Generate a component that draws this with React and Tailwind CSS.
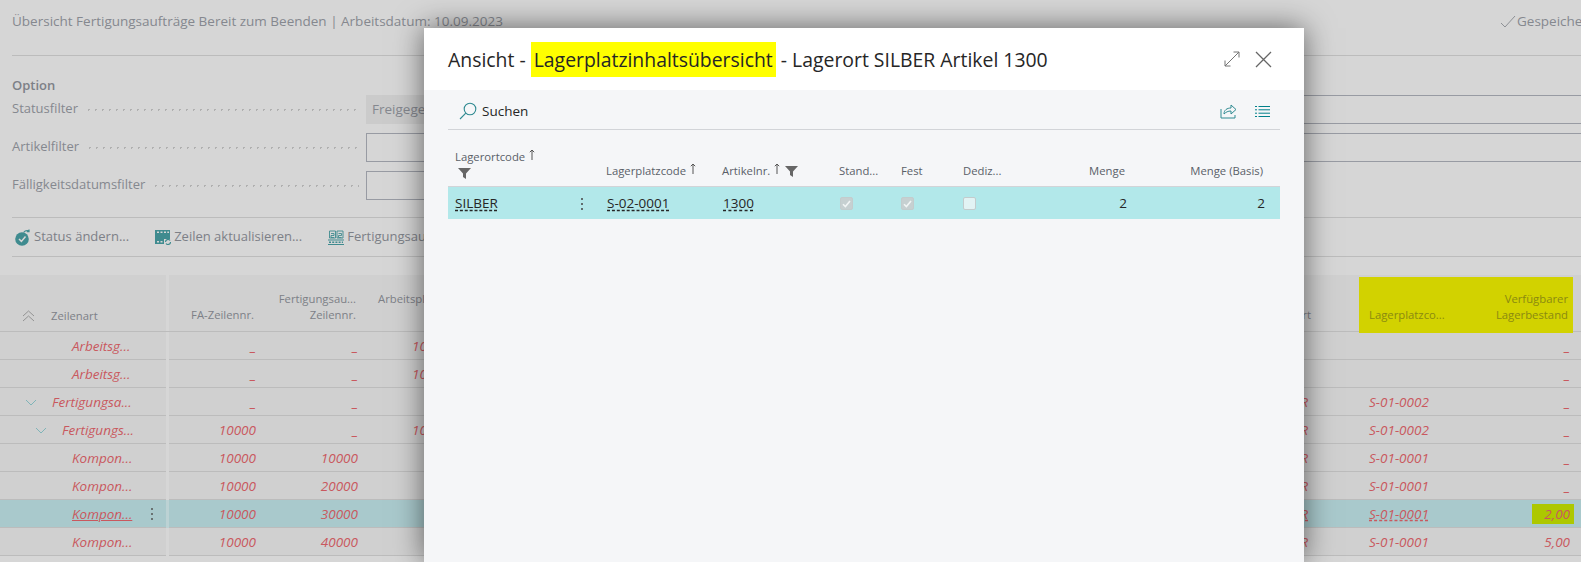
const font = "font-['Open_Sans','Noto_Sans',sans-serif]";
const rowGrid = "grid grid-cols-[166px_3px_90px_102px_110px_1fr_115px_155px_111px]";

const rows = [
  { art: "Arbeitsg...", indent: "pl-[72px]", fa: "_", faz: "_", arb: "100", ort: "", platz: "", best: "_" },
  { art: "Arbeitsg...", indent: "pl-[72px]", fa: "_", faz: "_", arb: "100", ort: "", platz: "", best: "_" },
  { art: "Fertigungsa...", indent: "pl-[52px]", chevron: "ml-[-27px]", fa: "_", faz: "_", arb: "", ort: "SILBER", platz: "S-01-0002", best: "_" },
  { art: "Fertigungs...", indent: "pl-[62px]", chevron: "ml-[-27px]", fa: "10000", faz: "_", arb: "100", ort: "SILBER", platz: "S-01-0002", best: "_" },
  { art: "Kompon...", indent: "pl-[72px]", fa: "10000", faz: "10000", arb: "", ort: "SILBER", platz: "S-01-0001", best: "_" },
  { art: "Kompon...", indent: "pl-[72px]", fa: "10000", faz: "20000", arb: "", ort: "SILBER", platz: "S-01-0001", best: "_" },
  { art: "Kompon...", indent: "pl-[72px]", fa: "10000", faz: "30000", arb: "", ort: "SILBER", platz: "S-01-0001", best: "2,00", selected: true },
  { art: "Kompon...", indent: "pl-[72px]", fa: "10000", faz: "40000", arb: "", ort: "SILBER", platz: "S-01-0001", best: "5,00" },
];

function Kebab({ color }) {
  return (
    <svg width="4" height="14" viewBox="0 0 4 14" className={color}>
      <circle cx="2" cy="2" r="1" fill="currentColor" />
      <circle cx="2" cy="7" r="1" fill="currentColor" />
      <circle cx="2" cy="12" r="1" fill="currentColor" />
    </svg>
  );
}

function Chevron({ className }) {
  return (
    <svg width="12" height="7" viewBox="0 0 12 7" fill="none" stroke="#7fb4b8" strokeWidth="1" className={className}>
      <path d="M1 1l5 5 5-5" />
    </svg>
  );
}

function FilterIcon({ className }) {
  return (
    <svg width="13" height="11" viewBox="0 0 13 11" className={className}>
      <path d="M0 0h13L8 5.500V11L5 9V5.500z" fill="#666" />
    </svg>
  );
}

function SortUp() {
  return (
    <svg width="6" height="11" viewBox="0 0 6 11" fill="none" stroke="#555" strokeWidth="1" className="ml-1 inline-block align-[1px]">
      <path d="M3 11V1M.8 3.200 3 1l2.200 2.200" />
    </svg>
  );
}

function Field({ label, children }) {
  return (
    <div className="flex h-[28px] items-center text-[13px] text-[#85888f]">
      <span className="w-auto whitespace-nowrap">{label}</span>
      <span className="mx-[7px] h-[3px] flex-1 bg-[radial-gradient(circle,#b0b0b0_1px,transparent_1px)] bg-[length:7px_3px] bg-repeat-x" />
      <div className="w-[1215px] shrink-0">{children}</div>
    </div>
  );
}

function CheckBox({ checked }) {
  return (
    <span className={`flex h-[13px] w-[13px] items-center justify-center rounded-[2px] border ${checked ? "border-[#c3cccd] bg-[#c6d0d1]" : "border-[#c3cccd] bg-[#e2f3f4]"}`}>
      {checked && (
        <svg width="9" height="8" viewBox="0 0 9 8" fill="none" stroke="#f1f5f5" strokeWidth="1.600">
          <path d="M1 4.200 3.400 6.600 8 1" />
        </svg>
      )}
    </span>
  );
}

function DataRow({ row }) {
  const sel = row.selected;
  const bg = sel ? "bg-[#a9c9cc]" : "bg-[#d0d0d0]";
  const line = "border-b border-[#bcbcbc] pt-[1px]";
  return (
    <div className={`${rowGrid} h-[28px] text-[13.5px] italic text-[#c9585e]`}>
      <div className={`flex items-center ${row.indent} ${bg} ${line}`}>
        {row.chevron && <Chevron className={`${row.chevron} mr-[15px] shrink-0`} />}
        <span className={sel ? "underline" : ""}>{row.art}</span>
        {sel && <Kebab color="ml-[18px] text-[#555]" />}
      </div>
      <div className={sel ? "bg-[#bcd2d4]" : "bg-[#d6d6d6]"} />
      <div className={`flex items-center justify-end pr-[3px] ${bg} ${line}`}>{row.fa}</div>
      <div className={`flex items-center justify-end pr-[3px] ${bg} ${line}`}>{row.faz}</div>
      <div className={`flex items-center pl-[51px] ${bg} ${line}`}>{row.arb}</div>
      <div className={`${bg} ${line}`} />
      <div className={`flex items-center justify-end pr-[7px] ${bg} ${line}`}>
        <span className={sel ? "underline decoration-dashed" : ""}>{row.ort}</span>
      </div>
      <div className={`flex items-center pl-[54px] ${bg} ${line}`}>
        <span className={sel ? "underline decoration-dashed" : ""}>{row.platz}</span>
      </div>
      <div className={`flex items-center justify-end ${bg} ${line}`}>
        {sel ? (
          <span className="mr-[7px] flex h-[20px] w-[42px] items-center justify-end bg-[#adc800] pr-[4px]">{row.best}</span>
        ) : (
          <span className="pr-[11px]">{row.best}</span>
        )}
      </div>
    </div>
  );
}

function BackgroundPage() {
  return (
    <div className="h-full bg-[#d6d6d6]">
      <div className="pl-[12px]">
        <div className="flex h-[56px] items-center border-b border-[#bcbcbc] pb-[13px] text-[13.5px] text-[#85888f]">
          <span className="flex-1 whitespace-nowrap">Übersicht Fertigungsaufträge Bereit zum Beenden | Arbeitsdatum: 10.09.2023</span>
          <div className="flex w-[81px] shrink-0 items-center gap-[1px] overflow-hidden whitespace-nowrap">
            <svg width="16" height="13" viewBox="0 0 16 13" fill="none" stroke="#8d9095" strokeWidth="1" className="shrink-0">
              <path d="M1 8l4 4L15 1" />
            </svg>
            Gespeichert
          </div>
        </div>
        <div className="pt-[20px] text-[13px] font-semibold leading-[19px] text-[#7d8087]">Option</div>
        <div className="flex flex-col gap-[10px]">
          <Field label="Statusfilter">
            <div className="flex h-[29px]">
              <div className="flex w-[150px] items-center bg-[#cbcbcb] pl-[6px] text-[13.5px]">Freigegeben</div>
              <div className="flex-1 border-y border-[#989ba3]" />
            </div>
          </Field>
          <Field label="Artikelfilter">
            <div className="h-[29px] border border-r-0 border-[#989ba3]" />
          </Field>
          <Field label="Fälligkeitsdatumsfilter">
            <div className="h-[29px] w-[200px] border border-[#989ba3]" />
          </Field>
        </div>
        <div className="mt-[18px] flex h-[40px] items-center gap-[26px] border-y border-[#bcbcbc] text-[13px] text-[#7d8087]">
          <div className="flex items-center gap-[3px] pl-[2px]">
            <svg width="17" height="17" viewBox="0 0 17 17">
              <circle cx="8" cy="10" r="6.800" fill="#3f8b8f" />
              <path d="M5 10l2.400 2.400L11.500 7.600" stroke="#d6d6d6" strokeWidth="1.500" fill="none" />
              <path d="M9.500 3.500c1.600-2 3.500-2.400 5.500-1.600M15 .5v2.200h-2.200" stroke="#3f8b8f" strokeWidth="1.200" fill="none" />
            </svg>
            Status ändern...
          </div>
          <div className="flex items-center gap-[3px]">
            <svg width="16" height="15" viewBox="0 0 16 15">
              <path d="M0 0h15v9h-6v5H0z" fill="#3f8b8f" />
              <path d="M2 1.500h2v1.500H2zm3.500 0h2v1.500h-2zm3.500 0h2v1.500H9zm3.300 0h1.700v1.500h-1.700zM2 11h2v1.500H2zm3.500 0h2v1.500h-2z" fill="#d6d6d6" />
              <path d="M10.500 12a2.500 2.500 0 0 1 4.500-1.500M15.500 12a2.500 2.500 0 0 1-4.500 1.500" stroke="#3f8b8f" strokeWidth="1.200" fill="none" />
            </svg>
            Zeilen aktualisieren...
          </div>
          <div className="flex items-center gap-[3px]">
            <svg width="16" height="15" viewBox="0 0 16 15" fill="none" stroke="#3f8b8f">
              <path d="M1.500 1h6v7h-6zM9 1h6v7H9zM3 3.500h3v2H3v2h3M10.500 3.500h3v2h-3v2h3" strokeWidth="0.900" />
              <path d="M0 10h16M0 14.500h16" strokeWidth="1" />
              <path d="M1 12.200h14" strokeWidth="1.600" strokeDasharray="2 1.200" />
            </svg>
            Fertigungsauftrag
          </div>
        </div>
      </div>

      <div className="mt-[18px]">
        <div className={`${rowGrid} h-[57px] border-b border-[#bcbcbc] text-[11.3px] leading-[16px] text-[#7d8087]`}>
          <div className="flex items-center bg-[#d0d0d0] pl-[22px] pt-[25px]">
            <svg width="13" height="12" viewBox="0 0 13 12" fill="none" stroke="#949494">
              <path d="M1 6l5.500-5L12 6M1 11l5.500-5L12 11" />
            </svg>
            <span className="pl-[16px]">Zeilenart</span>
          </div>
          <div className="bg-[#d6d6d6]" />
          <div className="flex items-end justify-end bg-[#d0d0d0] pb-[8px] pr-[5px]">FA-Zeilennr.</div>
          <div className="flex flex-col items-end justify-end bg-[#d0d0d0] pb-[8px] pr-[5px]">
            <span>Fertigungsau...</span>
            <span>Zeilennr.</span>
          </div>
          <div className="flex items-end whitespace-nowrap bg-[#d0d0d0] pb-[24px] pl-[17px]">Arbeitsplannr.</div>
          <div className="bg-[#d0d0d0]" />
          <div className="flex items-end justify-end bg-[#d0d0d0] pb-[8px] pr-[4px]">Lagerort</div>
          <div className="relative z-0 flex items-end bg-[#d0d0d0] pb-[8px] pl-[54px]">
            <div className="absolute bottom-[-2px] left-[44px] top-[2px] -z-10 w-[111px] bg-[#d2d200]" />
            <span className="text-[#8a8a10]">Lagerplatzco...</span>
          </div>
          <div className="relative z-0 flex flex-col items-end justify-end bg-[#d0d0d0] pb-[8px] pr-[13px] text-[#8a8a10]">
            <div className="absolute bottom-[-2px] left-0 right-[8px] top-[2px] -z-10 bg-[#d2d200]" />
            <span>Verfügbarer</span>
            <span>Lagerbestand</span>
          </div>
        </div>
        {rows.map((row, i) => (
          <DataRow key={i} row={row} />
        ))}
      </div>
    </div>
  );
}

function Modal() {
  return (
    <div className="absolute bottom-0 left-[424px] top-[28px] flex w-[880px] flex-col bg-[#f5f6f8] shadow-[0_0_28px_rgba(0,0,0,0.55)]">
      <div className="flex h-[62px] items-center bg-white pl-[24px] pr-[32px]">
        <h1 className="flex-1 whitespace-nowrap pt-[1px] text-[19.4px] font-medium text-[#262626]">
          Ansicht - <span className="bg-[#ffff00] px-[3px] py-[4px]">Lagerplatzinhaltsübersicht</span> - Lagerort SILBER Artikel 1300
        </h1>
        <svg width="16" height="16" viewBox="0 0 16 16" fill="none" stroke="#757575" strokeWidth="1" className="mr-[15px]">
          <path d="M1 15 15 1M9.500 1H15v5.500M1 9.500V15h5.500" />
        </svg>
        <svg width="17" height="17" viewBox="0 0 17 17" fill="none" stroke="#666" strokeWidth="1.300">
          <path d="M1 1l15 15M16 1 1 16" />
        </svg>
      </div>
      <div className="flex-1 px-[24px]">
        <div className="flex h-[40px] items-center border-b border-[#d2d4d8] pt-[3px]">
          <svg width="18" height="18" viewBox="0 0 18 18" fill="none" strokeWidth="1.100" className="ml-[11px]">
            <circle cx="11" cy="7" r="5.800" stroke="#2f8a91" />
            <path d="M6.800 11.200 1 17" stroke="#2f8a91" />
          </svg>
          <span className="ml-[5px] flex-1 text-[13.5px] text-[#262626]">Suchen</span>
          <svg width="17" height="16" viewBox="0 0 17 16" fill="none" stroke="#2f8a91" strokeWidth="1" className="mr-[18px]">
            <path d="M1 6v9h14v-3" />
            <path d="M4 11c0-4 3-6 7-6V2l5 4.500L11 11V8C8 8 6 9 4 11z" />
          </svg>
          <svg width="15" height="11" viewBox="0 0 15 11" fill="none" stroke="#00808a" strokeWidth="1" className="mr-[10px]">
            <path d="M3.500.5H15M3.500 3.800H15M3.500 7.200H15M3.500 10.500H15M0 .5h2M0 3.800h2M0 7.200h2M0 10.500h2" />
          </svg>
        </div>
        <div className="grid h-[57px] grid-cols-[152px_116px_116px_62px_62px_74px_102px_148px] border-b border-[#d2d4d8] pb-[7px] text-[11.3px] leading-[16px] text-[#5a5f68]">
          <div className="flex flex-col justify-end pl-[7px]">
            <span className="whitespace-nowrap">Lagerortcode<SortUp /></span>
            <FilterIcon className="mb-[0px] ml-[3px] mt-[3px]" />
          </div>
          <div className="flex items-end pl-[6px]"><span>Lagerplatzcode<SortUp /></span></div>
          <div className="flex items-end pl-[6px]">
            <span>Artikelnr.<SortUp /></span>
            <FilterIcon className="mb-[2px] ml-[5px]" />
          </div>
          <div className="flex items-end pl-[7px]">Stand...</div>
          <div className="flex items-end pl-[7px]">Fest</div>
          <div className="flex items-end pl-[7px]">Dediz...</div>
          <div className="flex items-end justify-end pr-[7px]">Menge</div>
          <div className="flex items-end justify-end pr-[17px]">Menge (Basis)</div>
        </div>
        <div className="grid h-[32px] grid-cols-[152px_116px_116px_62px_62px_74px_102px_148px] items-center bg-[#b2e8ea] pt-[1px] text-[13.5px] text-[#262626]">
          <div className="flex items-center justify-between pl-[7px] pr-[16px]">
            <span className="underline decoration-dashed">SILBER</span>
            <Kebab color="text-[#444]" />
          </div>
          <div className="pl-[7px]"><span className="underline decoration-dashed">S-02-0001</span></div>
          <div className="pl-[7px]"><span className="underline decoration-dashed">1300</span></div>
          <div className="pl-[8px]"><CheckBox checked /></div>
          <div className="pl-[7px]"><CheckBox checked /></div>
          <div className="pl-[7px]"><CheckBox /></div>
          <div className="pr-[5px] text-right">2</div>
          <div className="pr-[15px] text-right">2</div>
        </div>
      </div>
    </div>
  );
}

export default function App() {
  return (
    <div className={`relative h-[562px] w-full overflow-hidden ${font}`}>
      <BackgroundPage />
      <Modal />
    </div>
  );
}
